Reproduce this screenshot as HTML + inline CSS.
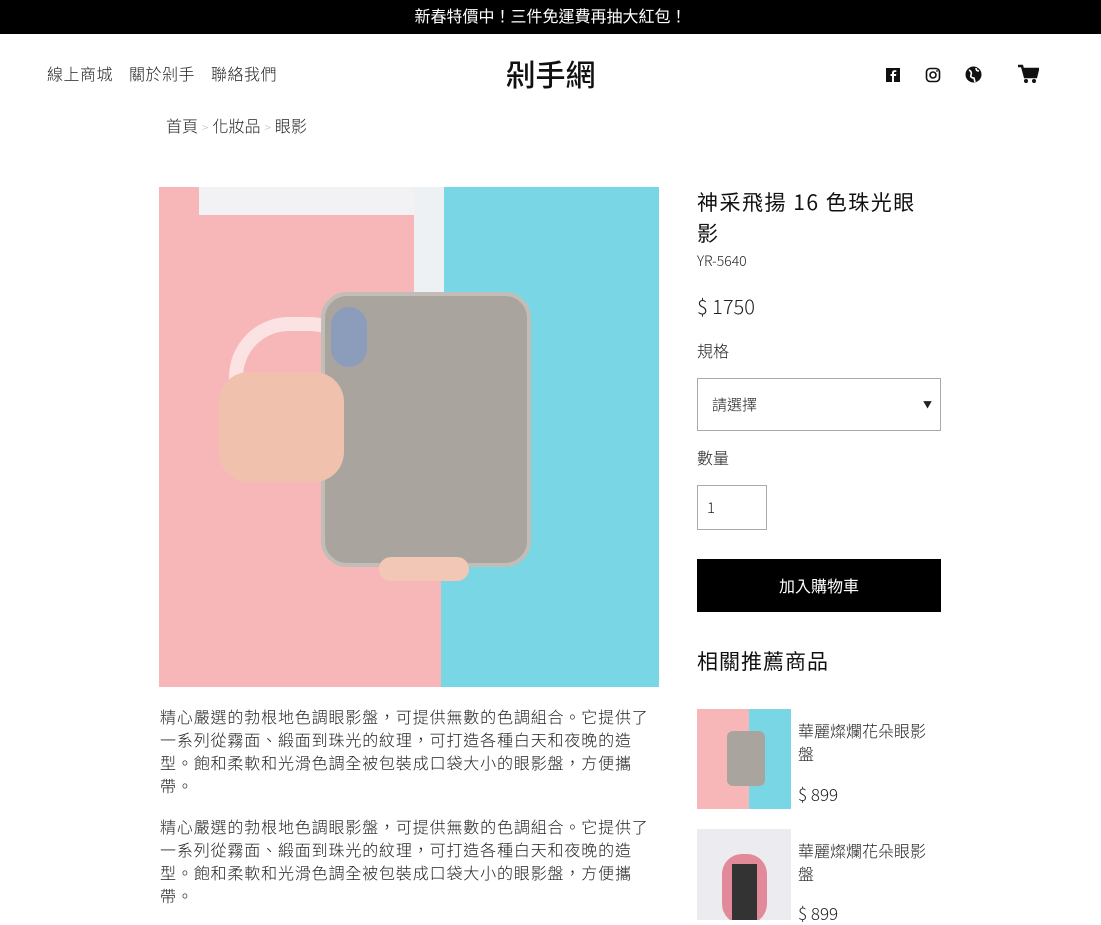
<!DOCTYPE html>
<html><head><meta charset="utf-8"><style>
*{margin:0;padding:0;box-sizing:border-box}
body{width:1101px;height:920px;overflow:hidden;background:#fff;font-family:"Noto Sans CJK TC","Liberation Sans",sans-serif;font-weight:300;color:#222;position:relative}
.a{position:absolute;line-height:1.4}
.top{left:0;top:0;width:1101px;height:34px;background:#000;color:#fff;text-align:center;font-size:16px;line-height:30px;font-weight:400}
.nav{top:62px;font-size:16px;left:47px;letter-spacing:.5px}
.nav span{margin-right:16px}
.logo{left:0;width:1101px;text-align:center;top:52px;font-size:30px;font-weight:500;color:#111}
.bc{left:166px;top:114px;font-size:16px}
.bc i{color:#bbb;font-style:normal;font-size:12px;margin:0 4px}
.desc{left:160px;width:500px;font-size:16px;line-height:23px;color:#222;letter-spacing:.85px}
.r{left:697px}
</style></head><body>
<div class="a top">新春特價中！三件免運費再抽大紅包！</div>
<div class="a nav"><span>線上商城</span><span>關於剁手</span><span>聯絡我們</span></div>
<div class="a logo">剁手網</div>
<svg class="a" style="left:885px;top:67px" width="16" height="16"><rect x="1" y="1" width="14" height="14" fill="#111"/><path d="M9 15V9h2l.3-2H9V6c0-.6.2-1 1-1h1.3V3.2H9.8C8 3.2 7 4.2 7 6v1H5.5v2H7v6z" fill="#fff"/></svg>
<svg class="a" style="left:925px;top:67px" width="16" height="16"><rect x="1.5" y="1.5" width="13" height="13" rx="3.5" fill="none" stroke="#111" stroke-width="1.6"/><circle cx="8" cy="8" r="3" fill="none" stroke="#111" stroke-width="1.6"/><circle cx="12" cy="4" r=".9" fill="#111"/></svg>
<svg class="a" style="left:965px;top:66px" width="17" height="17"><circle cx="8.5" cy="8.5" r="8" fill="#111"/><path d="M4 4c2 1 3 3 2 5s1 3 3 3l1 4 M11 2c0 2 1 3 3 3" fill="none" stroke="#fff" stroke-width="1.6"/></svg>
<svg class="a" style="left:1017px;top:64px" width="22" height="20"><path d="M1 2h4l3 11h11l2-8H6" fill="none" stroke="#111" stroke-width="2.5"/><rect x="7" y="5" width="13" height="7" fill="#111"/><circle cx="9" cy="17" r="2" fill="#111"/><circle cx="17" cy="17" r="2" fill="#111"/></svg>
<div class="a bc">首頁<i>&gt;</i>化妝品<i>&gt;</i>眼影</div>

<div class="a" style="left:159px;top:187px;width:500px;height:500px;background:#79d7e5;overflow:hidden">
<div class="a" style="left:0;top:0;width:282px;height:500px;background:#f7b7b9"></div>
<div class="a" style="left:40px;top:0;width:240px;height:28px;background:#f2f2f4"></div>
<div class="a" style="left:70px;top:130px;width:140px;height:100px;border:14px solid #fbe3e3;border-radius:60px 60px 0 0"></div>
<div class="a" style="left:255px;top:0;width:30px;height:120px;background:#eef1f4"></div>
<div class="a" style="left:162px;top:105px;width:210px;height:275px;background:#a9a49d;border-radius:26px;border:4px solid #c2bdb6"></div>
<div class="a" style="left:60px;top:185px;width:125px;height:110px;background:#f0c2ad;border-radius:30px"></div>
<div class="a" style="left:172px;top:120px;width:36px;height:60px;background:#8c9cbb;border-radius:18px"></div>
<div class="a" style="left:220px;top:370px;width:90px;height:24px;background:#f3c7b6;border-radius:12px"></div>
</div>

<div class="a desc" style="top:705px">精心嚴選的勃根地色調眼影盤，可提供無數的色調組合。它提供了一系列從霧面、緞面到珠光的紋理，可打造各種白天和夜晚的造型。飽和柔軟和光滑色調全被包裝成口袋大小的眼影盤，方便攜帶。</div>
<div class="a desc" style="top:815px">精心嚴選的勃根地色調眼影盤，可提供無數的色調組合。它提供了一系列從霧面、緞面到珠光的紋理，可打造各種白天和夜晚的造型。飽和柔軟和光滑色調全被包裝成口袋大小的眼影盤，方便攜帶。</div>

<div class="a r" style="top:187px;width:232px;font-size:21px;line-height:31px;letter-spacing:1.5px;color:#111;font-weight:400">神采飛揚 16 色珠光眼影</div>
<div class="a r" style="top:252px;font-size:14px">YR-5640</div>
<div class="a r" style="top:292px;font-size:20px">$ 1750</div>
<div class="a r" style="top:339px;font-size:16px">規格</div>
<div class="a r" style="top:378px;width:244px;height:53px;border:1px solid #aaa;font-size:15px;line-height:51px;padding-left:14px">請選擇<span style="position:absolute;right:8px;font-size:9px">▼</span></div>
<div class="a r" style="top:446px;font-size:16px">數量</div>
<div class="a r" style="top:485px;width:70px;height:45px;border:1px solid #aaa;font-size:15px;line-height:43px;padding-left:9px">1</div>
<div class="a r" style="top:559px;width:244px;height:53px;background:#000;color:#fff;text-align:center;line-height:53px;font-size:16px;font-weight:400">加入購物車</div>
<div class="a r" style="top:647px;font-size:21px;letter-spacing:1px;color:#111;font-weight:400">相關推薦商品</div>

<div class="a r" style="top:709px;width:94px;height:100px;background:#79d7e5;overflow:hidden"><div class="a" style="left:0;top:0;width:52px;height:100px;background:#f7b7b9"></div><div class="a" style="left:30px;top:22px;width:38px;height:55px;background:#a9a49d;border-radius:6px"></div></div>
<div class="a" style="left:798px;top:719px;width:140px;font-size:16px;line-height:23px">華麗燦爛花朵眼影盤</div>
<div class="a" style="left:798px;top:782px;font-size:17px">$ 899</div>
<div class="a r" style="top:829px;width:94px;height:91px;background:#ececf0;overflow:hidden"><div class="a" style="left:25px;top:25px;width:45px;height:70px;background:#e38a9a;border-radius:20px"></div><div class="a" style="left:35px;top:35px;width:25px;height:60px;background:#333"></div></div>
<div class="a" style="left:798px;top:839px;width:140px;font-size:16px;line-height:23px">華麗燦爛花朵眼影盤</div>
<div class="a" style="left:798px;top:901px;font-size:17px">$ 899</div>
</body></html>
